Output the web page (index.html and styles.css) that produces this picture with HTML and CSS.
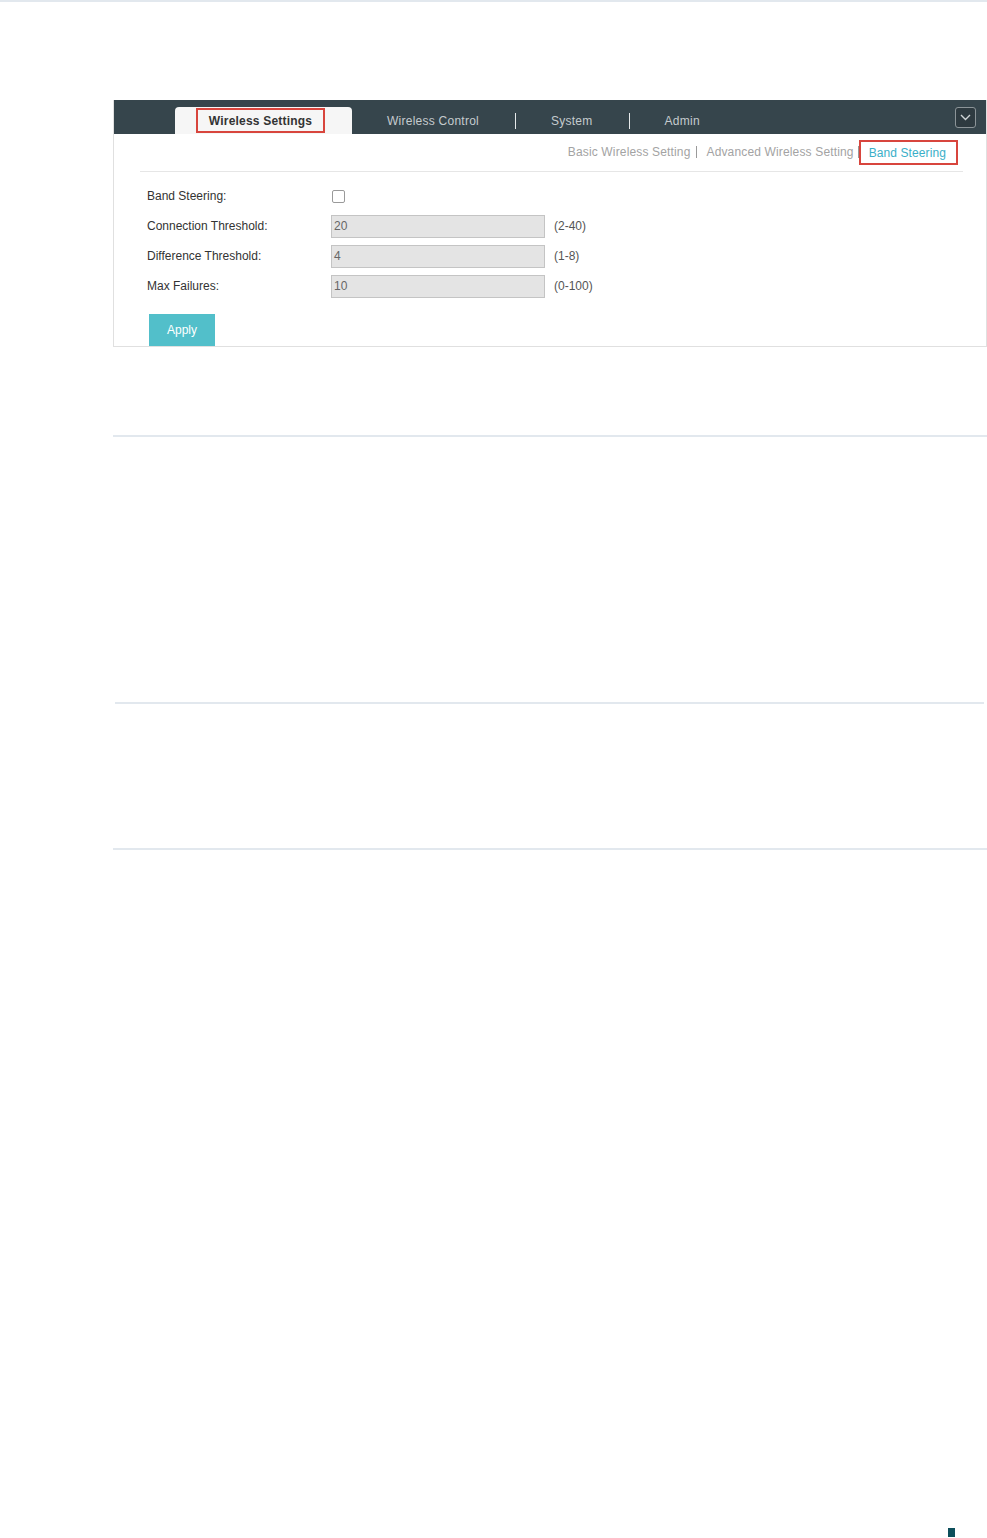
FILE: index.html
```
<!DOCTYPE html>
<html>
<head lang="en">
    <meta charset="UTF-8">
    <title>Band Steering</title>
<link rel="stylesheet" href="styles.css">
</head>
<body>
  <div class="topRule"></div>

  <div class="page">
    <div class="shot">
      <div class="navBar">
        <div class="navTab"><span class="mark">Wireless Settings</span></div>
        <ul class="navItems">
          <li>Wireless Control</li>
          <li class="sep"></li>
          <li>System</li>
          <li class="sep"></li>
          <li>Admin</li>
        </ul>
        <div class="navMore">
          <svg width="11" height="7" viewBox="0 0 11 7"><path d="M1 1 L5.5 5.5 L10 1" fill="none" stroke="#cfd4d6" stroke-width="1.4"/></svg>
        </div>
      </div>

      <div class="shotBody">
        <ul class="subMenu">
          <li>Basic Wireless Setting</li>
          <li class="sep"></li>
          <li>Advanced Wireless Setting</li>
          <li class="sep last"></li>
          <li class="active">Band Steering</li>
        </ul>

        <div class="form">
          <div class="row">
            <label>Band Steering:</label>
            <span class="check"></span>
          </div>
          <div class="row">
            <label>Connection Threshold:</label>
            <span class="field">20</span>
            <span class="range">(2-40)</span>
          </div>
          <div class="row">
            <label>Difference Threshold:</label>
            <span class="field">4</span>
            <span class="range">(1-8)</span>
          </div>
          <div class="row">
            <label>Max Failures:</label>
            <span class="field">10</span>
            <span class="range">(0-100)</span>
          </div>
        </div>

        <div class="apply">Apply</div>
      </div>
    </div>

    <div class="rule first"></div>
    <div class="rule second"></div>
    <div class="rule third"></div>

    <div class="pageMark"></div>
  </div>
</body>
</html>
```

FILE: styles.css
```
body, html {
    border: 0;
    padding: 0;
    margin: 0;
    overflow: hidden;
    background: #fff;
}

body{
  font-family: "Liberation Sans", Arial, sans-serif;
  font-size: 12px;
  height: 1538px;
}

.topRule{
  height: 2px;
  background: #e2e8ee;
}

.page{
  padding-left: 113px;
}

.shot{
  margin-top: 98px;
  width: 872px;
  border: 1px solid #e0e0e0;
  border-top: 0;
}

.navBar{
  height: 34px;
  background: #36454c;
  display: flex;
  align-items: flex-end;
}

.navTab{
  margin-left: 61px;
  width: 177px;
  height: 27px;
  background: #f6f6f6;
  border-radius: 4px 4px 0 0;
  display: flex;
  justify-content: center;
  align-items: flex-start;
}

.navTab .mark{
  margin-top: 1px;
  margin-left: -6px;
  width: 125px;
  height: 21px;
  border: 2px solid #d8453d;
  font-weight: bold;
  letter-spacing: 0.2px;
  color: #333;
  display: flex;
  align-items: center;
  justify-content: center;
}

.navItems{
  list-style: none;
  margin: 0;
  padding: 0 0 0 35px;
  height: 27px;
  display: flex;
  align-items: center;
  color: #c5cbce;
  letter-spacing: 0.25px;
}

.navItems li{
  padding: 0 36px 0 0;
}

.navItems li.sep{
  padding: 0;
  margin-right: 35px;
  width: 1px;
  height: 16px;
  background: #e6e9ea;
}

.navMore{
  margin-left: auto;
  margin-right: 10px;
  align-self: center;
  width: 19px;
  height: 19px;
  border: 1px solid #8c9498;
  border-radius: 3px;
  background: #2e3a40;
  display: flex;
  align-items: center;
  justify-content: center;
}

.shotBody{
  padding: 5px 23px 0 26px;
}

.subMenu{
  list-style: none;
  margin: 0 0 6px 0;
  padding: 0 5px 6px 0;
  display: flex;
  justify-content: flex-end;
  align-items: center;
  height: 26px;
  color: #a3a3a3;
  letter-spacing: 0.15px;
  border-bottom: 1px solid #e6e6e6;
}

.subMenu li.sep{
  width: 1px;
  height: 12px;
  background: #9a9a9a;
  margin: 0 9px 0 6px;
}

.subMenu li.sep.last{
  margin: 0 0 0 4px;
}

.subMenu li.active{
  color: #3aafc8;
  border: 2px solid #d8453d;
  height: 21px;
  line-height: 22px;
  padding: 0 10px 0 8px;
  letter-spacing: 0.1px;
}

.form{
  margin-top: 9px;
  padding-left: 7px;
}

.row{
  height: 30px;
  display: flex;
  align-items: center;
  color: #333;
}

.row label{
  width: 184px;
}

.check{
  margin-left: 1px;
  width: 11px;
  height: 11px;
  border: 1px solid #9a9a9a;
  border-radius: 2px;
  background: #fff;
}

.field{
  width: 210px;
  height: 21px;
  padding-left: 2px;
  background: #e4e4e4;
  border: 1px solid #c4c4c4;
  color: #666;
  line-height: 21px;
}

.range{
  margin-left: 9px;
  color: #555;
}

.apply{
  margin: 13px 0 0 9px;
  width: 66px;
  height: 32px;
  background: #52bfca;
  color: #fff;
  display: flex;
  align-items: center;
  justify-content: center;
}

.rule{
  height: 2px;
  background: #e2e8ee;
}

.rule.first{
  margin-top: 88px;
}

.rule.second{
  margin: 265px 3px 0 2px;
}

.rule.third{
  margin-top: 144px;
}

.pageMark{
  margin: 678px 0 0 835px;
  width: 7px;
  height: 9px;
  background: #0d4f5b;
}
```
